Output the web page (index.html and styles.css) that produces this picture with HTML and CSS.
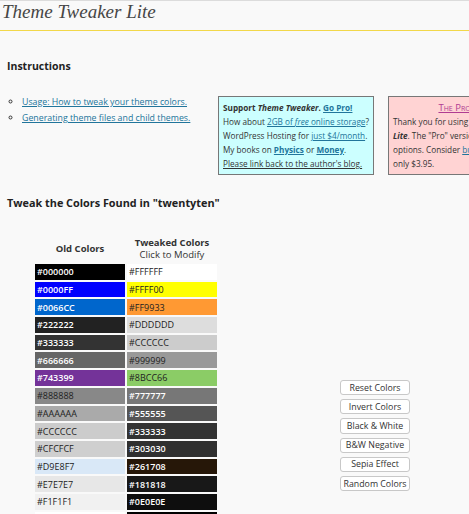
FILE: index.html
```html
<!DOCTYPE html>
<html lang="en">
<head>
  <meta charset="UTF-8">
  <title>Theme Tweaker Lite</title>
  <link rel="stylesheet" href="styles.css">
</head>
<body>

  <h1 class="titulo">Theme Tweaker Lite</h1>

  <div class="conteudo">
    <h2>Instructions</h2>

    <div class="info">
      <ul class="links">
        <li><a href="#">Usage: How to tweak your theme colors.</a></li>
        <li><a href="#">Generating theme files and child themes.</a></li>
      </ul>

      <div class="caixa azul">
        <b>Support <i>Theme Tweaker</i>.</b> <a href="#"><b>Go Pro!</b></a><br>
        How about <a href="#">2GB of <i>free</i> online storage</a>?<br>
        WordPress Hosting for <a href="#">just $4/month</a>.<br>
        My books on <a href="#"><b>Physics</b></a> or <a href="#"><b>Money</b></a>.<br>
        <a href="#" class="escuro">Please link back to the author's blog.</a>
      </div>

      <div class="caixa rosa">
        <div class="pro"><a href="#">The Pro Version</a></div>
        Thank you for using <b><i>Theme Tweaker</i></b><br>
        <b><i>Lite</i></b>. The "Pro" version has more<br>
        options. Consider <a href="#">buying it</a>. It costs<br>
        only $3.95.
      </div>
    </div>

    <h2 class="tweak">Tweak the Colors Found in "twentyten"</h2>

    <div class="area">
      <table class="cores">
        <thead>
          <tr>
            <th>Old Colors</th>
            <th>Tweaked Colors<br><span>Click to Modify</span></th>
          </tr>
        </thead>
        <tbody id="linhas"></tbody>
      </table>

      <div class="botoes">
        <button>Reset Colors</button>
        <button>Invert Colors</button>
        <button>Black &amp; White</button>
        <button>B&amp;W Negative</button>
        <button>Sepia Effect</button>
        <button>Random Colors</button>
      </div>
    </div>
  </div>

  <script>
    // pares de cores: antiga -> modificada
    const pares = [
      ["#000000", "#FFFFFF"],
      ["#0000FF", "#FFFF00"],
      ["#0066CC", "#FF9933"],
      ["#222222", "#DDDDDD"],
      ["#333333", "#CCCCCC"],
      ["#666666", "#999999"],
      ["#743399", "#8BCC66"],
      ["#888888", "#777777"],
      ["#AAAAAA", "#555555"],
      ["#CCCCCC", "#333333"],
      ["#CFCFCF", "#303030"],
      ["#D9E8F7", "#261708"],
      ["#E7E7E7", "#181818"],
      ["#F1F1F1", "#0E0E0E"],
      ["#FFFFFF", "#000000"]
    ];

    function claro(hex) {
      const r = parseInt(hex.substr(1, 2), 16);
      const g = parseInt(hex.substr(3, 2), 16);
      const b = parseInt(hex.substr(5, 2), 16);
      return (r * 299 + g * 587 + b * 114) / 1000 > 128;
    }

    function celula(hex) {
      const td = document.createElement("td");
      td.textContent = hex;
      td.style.background = hex;
      td.className = claro(hex) ? "clara" : "escura";
      return td;
    }

    const corpo = document.getElementById("linhas");
    pares.forEach(([antiga, nova]) => {
      const tr = document.createElement("tr");
      tr.appendChild(celula(antiga));
      tr.appendChild(celula(nova));
      corpo.appendChild(tr);
    });
  </script>

</body>
</html>
```

FILE: styles.css
```css
body {
  margin: 0;
  background: #f9f9f9;
  border-top: 1px solid #dcdcdc;
  color: #333;
  font-family: "Open Sans", sans-serif;
  font-size: 8.8px;
  overflow: hidden;
}
a {
  color: #21759b;
}
.titulo {
  margin: 0;
  padding: 0 0 7px 2px;
  font-family: "Liberation Serif", serif;
  font-style: italic;
  font-weight: normal;
  font-size: 19px;
  line-height: 22px;
  color: #464646;
  border-bottom: 1px solid #f2d84a;
}
.conteudo {
  padding: 0 7px;
}
h2 {
  margin: 0;
  padding-top: 28px;
  font-size: 10.5px;
  line-height: 14px;
  color: #222;
}
.info {
  display: flex;
  align-items: flex-start;
  margin-top: 23px;
}
.links {
  width: 211px;
  flex: none;
  margin: -2px 0 0;
  padding: 0 0 0 15px;
  box-sizing: border-box;
  list-style: circle;
}
.links li {
  line-height: 16px;
}
.caixa {
  flex: none;
  width: 146px;
  padding: 4px 4px 3px;
  border: 1px solid #777;
  font-size: 8.2px;
  line-height: 14px;
  white-space: nowrap;
  overflow: hidden;
}
.azul {
  background: #ccffff;
}
.rosa {
  margin-left: 14px;
  width: 156px;
  background: #ffd3d3;
}
.pro {
  text-align: center;
  font-variant: small-caps;
  font-size: 9.5px;
}
.pro a {
  color: #b03c92;
}
a.escuro {
  color: #333;
}
.tweak {
  padding-top: 21px;
  font-size: 10.85px;
}
.area {
  display: flex;
  align-items: flex-start;
  margin-top: 25px;
}
.cores {
  margin-left: 26px;
  border-spacing: 2px;
  font-size: 9px;
}
.cores th {
  font-size: 9.5px;
  line-height: 12px;
  color: #333;
  padding: 0 0 1px;
}
.cores th span {
  font-weight: normal;
}
.cores td {
  width: 86px;
  height: 15.7px;
  padding: 0 2px;
  line-height: 15px;
}
.cores td.escura {
  color: #fff;
  font-weight: 600;
}
.cores td.clara {
  color: #222;
}
.botoes {
  display: flex;
  flex-direction: column;
  gap: 4px;
  margin-left: 121px;
  padding-top: 145px;
}
.botoes button {
  width: 70px;
  height: 15.2px;
  padding: 0;
  font-family: "Open Sans", sans-serif;
  font-size: 8.8px;
  color: #333;
  background: #fff;
  border: 1px solid #c8c8c8;
  border-radius: 3px;
}
```
